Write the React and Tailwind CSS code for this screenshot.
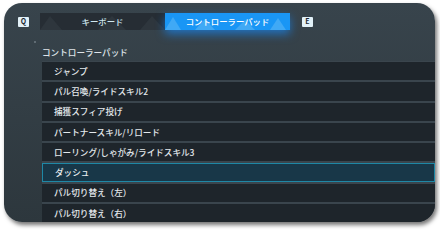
const ROWS = [
  'ジャンプ',
  'パル召喚/ライドスキル2',
  '捕獲スフィア投げ',
  'パートナースキル/リロード',
  'ローリング/しゃがみ/ライドスキル3',
  'ダッシュ',
  'パル切り替え（左）',
  'パル切り替え（右）',
]

const font = { fontFamily: '"Noto Sans CJK JP", "Noto Sans", sans-serif' }

export default function App() {
  return (
    <div className="w-[440px] h-[230px] bg-white pt-[3px] pl-[4px]" style={font}>
      <div className="relative w-[431px] h-[219px] rounded-[18px] overflow-hidden bg-gradient-to-b from-[#38444c] to-[#2d373d] shadow-[2px_3px_4px_rgba(0,0,0,0.55)]">

        {/* tab bar */}
        <div className="flex items-center h-[17px] mt-[10px]">
          <Key label="Q" className="ml-[14px] mr-[11px]" />
          <Tab label="キーボード" />
          <Tab label="コントローラーパッド" active />
          <Key label="E" className="ml-[12px]" />
        </div>

        <div className="ml-[30px] mt-[11px] w-[2px] h-[2px] bg-[#5f6b73]" />

        <div className="ml-[38px] mt-[3px] h-[13px] flex items-center text-[8.6px] font-medium text-[#dfe4e8]">
          コントローラーパッド
        </div>

        <div className="ml-[38px] mt-[2px] flex flex-col gap-[2px] bg-[#3a454d] pt-[1px]">
          {ROWS.map(r => <Row key={r} label={r} active={r === 'ダッシュ'} />)}
        </div>
      </div>
    </div>
  )
}

function Key({ label, className = '' }) {
  return (
    <div className={`w-[11px] h-[10px] rounded-[1px] bg-[#e2f1f8] flex items-center justify-center text-[7px] font-bold text-[#1d2830] leading-none ${className}`}>
      {label}
    </div>
  )
}

function Tab({ label, active }) {
  return (
    <div className={`relative w-[125px] h-[17px] flex items-center justify-center ${active ? 'bg-[#1a96f5] shadow-[0_4px_10px_rgba(20,140,255,0.65)]' : 'bg-[#262d34]'}`}>
      <svg className="absolute inset-0" width="125" height="17" viewBox="0 0 125 17">
        {active ? (
          <g fill="#4aaef5" opacity="0.8">
            <polygon points="0,17 8,4 16,17" />
            <polygon points="30,17 40,6 50,17" />
            <polygon points="70,17 80,7 90,17" />
            <polygon points="105,17 113,5 121,17" />
          </g>
        ) : (
          <g fill="#2e363d">
            <polygon points="0,17 10,3 22,17" />
            <polygon points="58,17 72,3 86,17" />
            <polygon points="100,17 112,3 125,17" />
          </g>
        )}
      </svg>
      <span className={`relative text-[8.4px] font-medium ${active ? 'text-white' : 'text-[#cfe6ee]'}`}>{label}</span>
    </div>
  )
}

function Row({ label, active }) {
  return (
    <div className={`h-[18.3px] flex items-center pl-[12px] text-[8.6px] font-medium ${active ? 'bg-[#183748] border border-[#1e88a6] pl-[11px] text-[#e6ecef]' : 'bg-[#1e252b] text-[#e3e8eb]'}`}>
      {label}
    </div>
  )
}
